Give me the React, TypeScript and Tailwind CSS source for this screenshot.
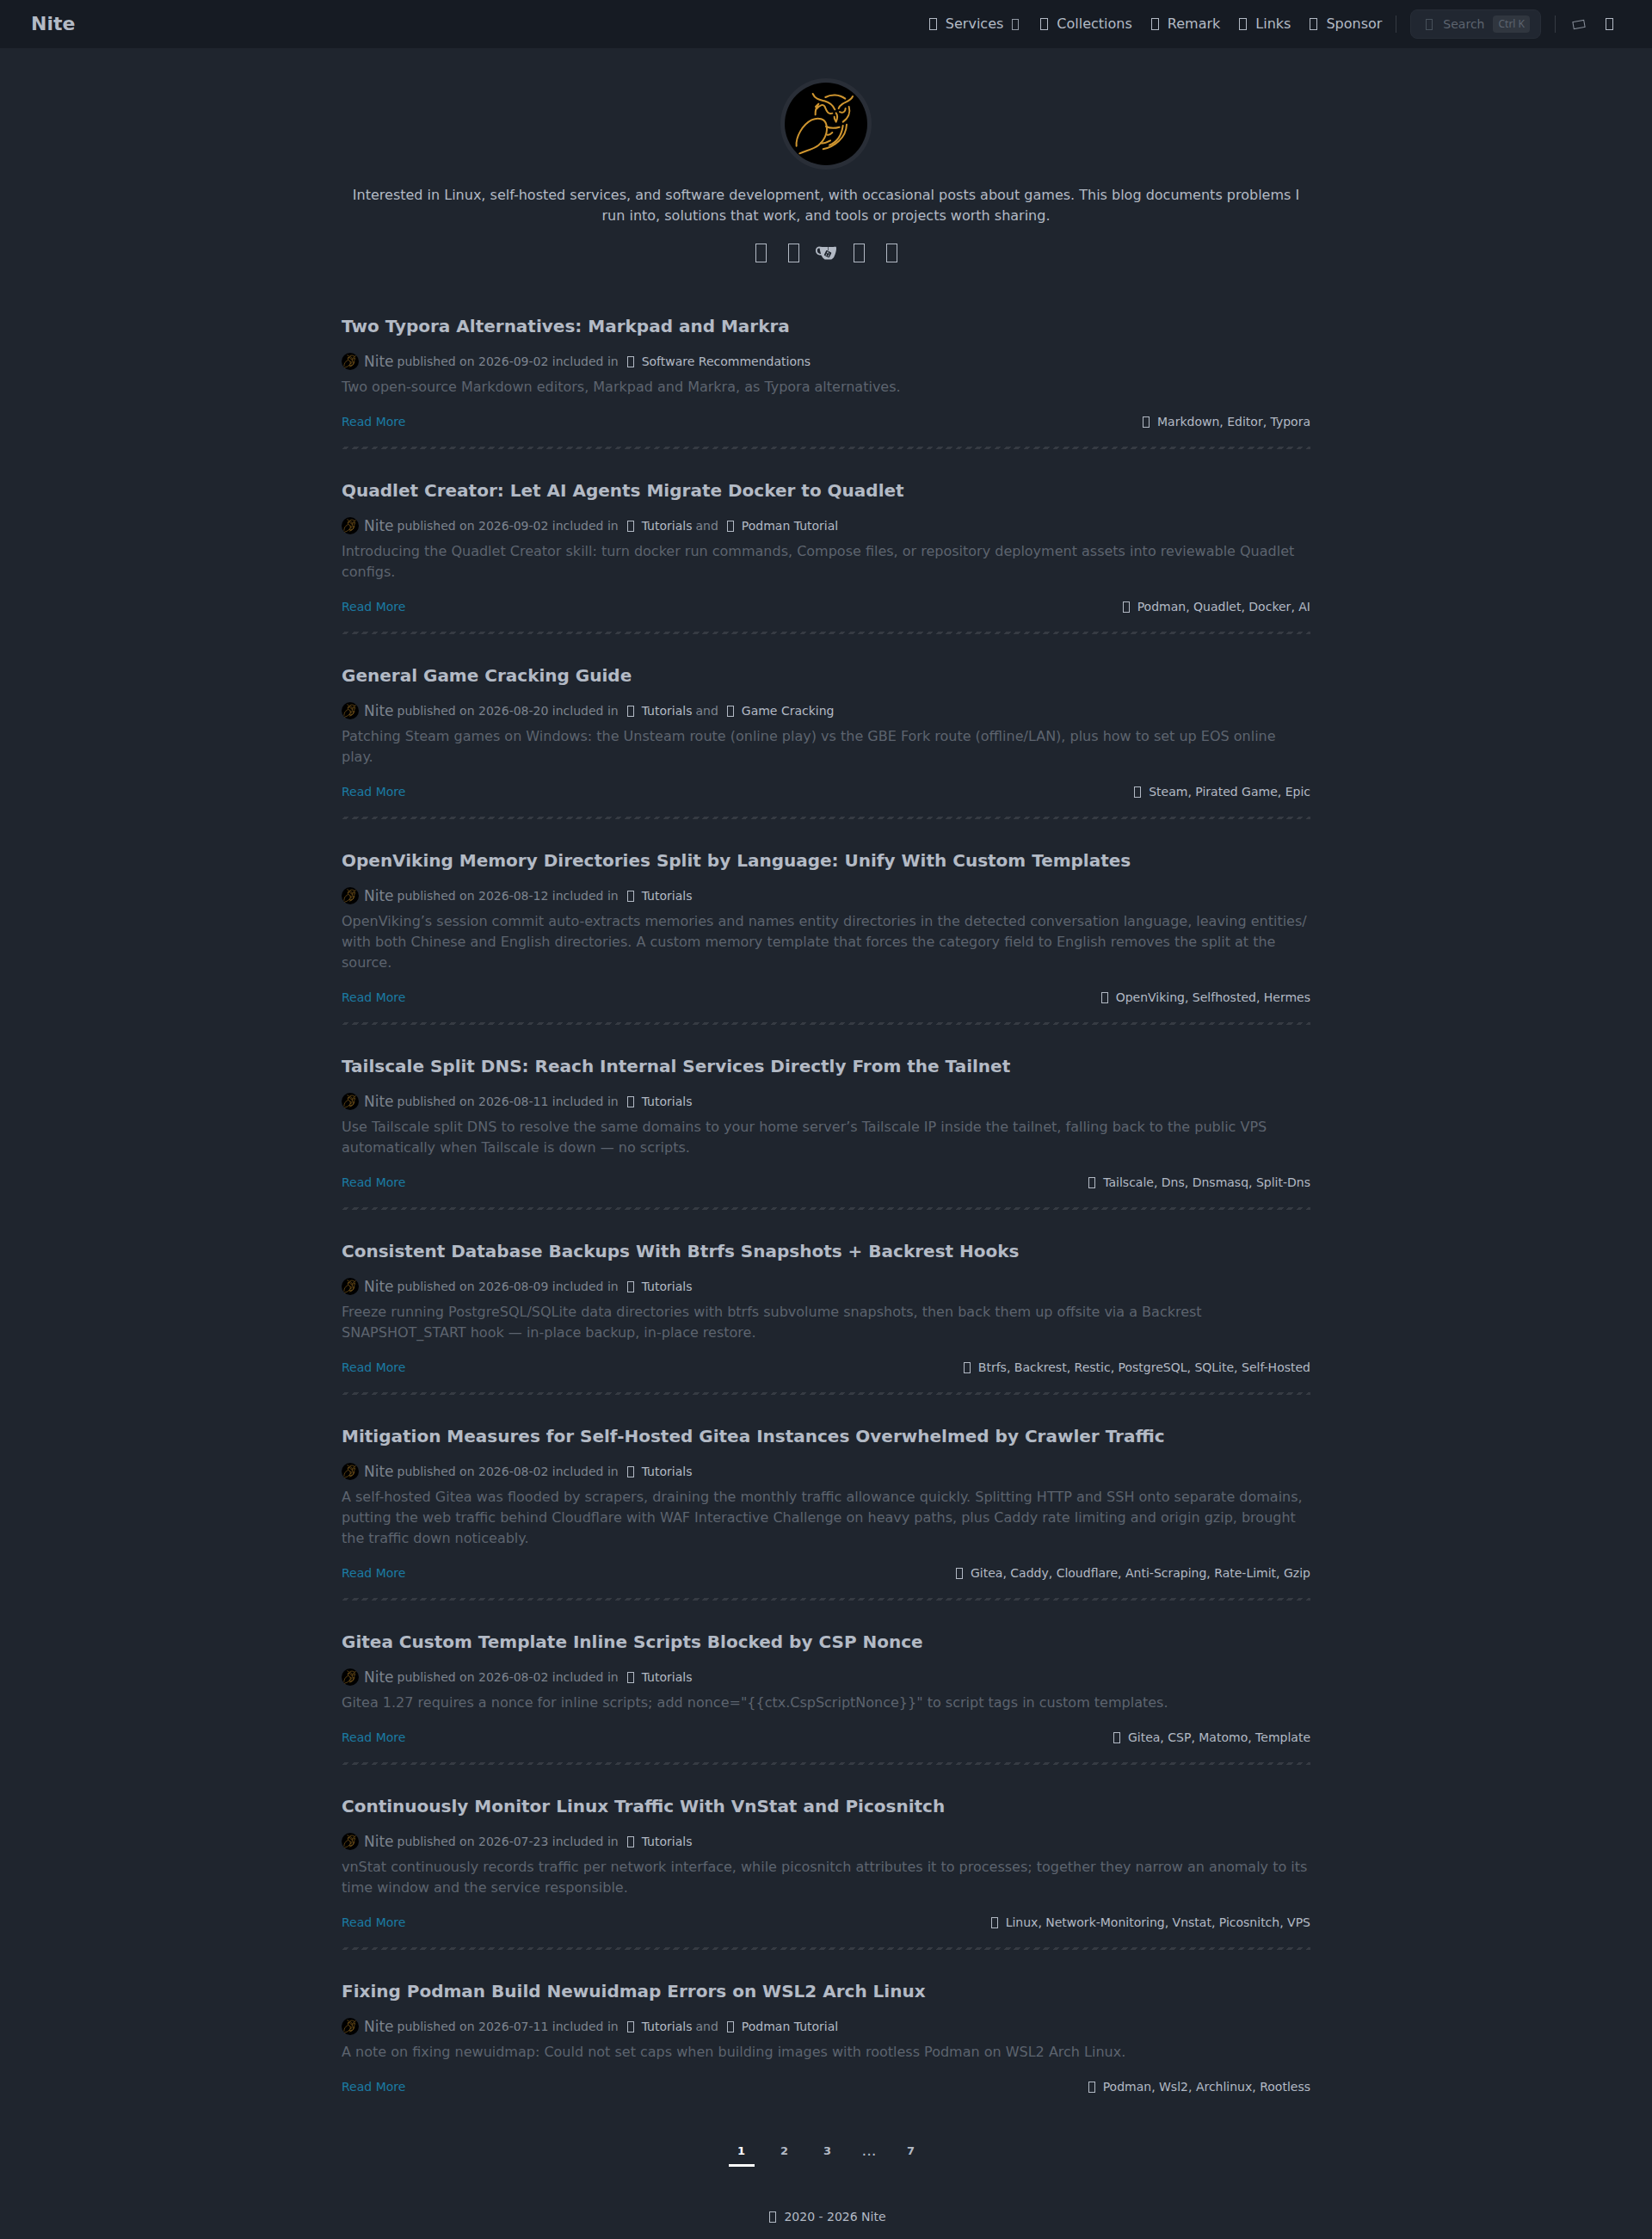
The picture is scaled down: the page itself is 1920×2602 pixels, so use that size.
import React from 'react';
import { SiGitea } from 'react-icons/si';

interface Post {
    title: string;
    date: string;
    categories: string[];
    summary: string;
    tags: string[];
}

const posts: Post[] = [
    {
        title: 'Two Typora Alternatives: Markpad and Markra',
        date: '2026-09-02',
        categories: ['Software Recommendations'],
        summary: 'Two open-source Markdown editors, Markpad and Markra, as Typora alternatives.',
        tags: ['Markdown', 'Editor', 'Typora'],
    },
    {
        title: 'Quadlet Creator: Let AI Agents Migrate Docker to Quadlet',
        date: '2026-09-02',
        categories: ['Tutorials', 'Podman Tutorial'],
        summary: 'Introducing the Quadlet Creator skill: turn docker run commands, Compose files, or repository deployment assets into reviewable Quadlet configs.',
        tags: ['Podman', 'Quadlet', 'Docker', 'AI'],
    },
    {
        title: 'General Game Cracking Guide',
        date: '2026-08-20',
        categories: ['Tutorials', 'Game Cracking'],
        summary: 'Patching Steam games on Windows: the Unsteam route (online play) vs the GBE Fork route (offline/LAN), plus how to set up EOS online play.',
        tags: ['Steam', 'Pirated Game', 'Epic'],
    },
    {
        title: 'OpenViking Memory Directories Split by Language: Unify With Custom Templates',
        date: '2026-08-12',
        categories: ['Tutorials'],
        summary: 'OpenViking’s session commit auto-extracts memories and names entity directories in the detected conversation language, leaving entities/ with both Chinese and English directories. A custom memory template that forces the category field to English removes the split at the source.',
        tags: ['OpenViking', 'Selfhosted', 'Hermes'],
    },
    {
        title: 'Tailscale Split DNS: Reach Internal Services Directly From the Tailnet',
        date: '2026-08-11',
        categories: ['Tutorials'],
        summary: 'Use Tailscale split DNS to resolve the same domains to your home server’s Tailscale IP inside the tailnet, falling back to the public VPS automatically when Tailscale is down — no scripts.',
        tags: ['Tailscale', 'Dns', 'Dnsmasq', 'Split-Dns'],
    },
    {
        title: 'Consistent Database Backups With Btrfs Snapshots + Backrest Hooks',
        date: '2026-08-09',
        categories: ['Tutorials'],
        summary: 'Freeze running PostgreSQL/SQLite data directories with btrfs subvolume snapshots, then back them up offsite via a Backrest SNAPSHOT_START hook — in-place backup, in-place restore.',
        tags: ['Btrfs', 'Backrest', 'Restic', 'PostgreSQL', 'SQLite', 'Self-Hosted'],
    },
    {
        title: 'Mitigation Measures for Self-Hosted Gitea Instances Overwhelmed by Crawler Traffic',
        date: '2026-08-02',
        categories: ['Tutorials'],
        summary: 'A self-hosted Gitea was flooded by scrapers, draining the monthly traffic allowance quickly. Splitting HTTP and SSH onto separate domains, putting the web traffic behind Cloudflare with WAF Interactive Challenge on heavy paths, plus Caddy rate limiting and origin gzip, brought the traffic down noticeably.',
        tags: ['Gitea', 'Caddy', 'Cloudflare', 'Anti-Scraping', 'Rate-Limit', 'Gzip'],
    },
    {
        title: 'Gitea Custom Template Inline Scripts Blocked by CSP Nonce',
        date: '2026-08-02',
        categories: ['Tutorials'],
        summary: 'Gitea 1.27 requires a nonce for inline scripts; add nonce="{{ctx.CspScriptNonce}}" to script tags in custom templates.',
        tags: ['Gitea', 'CSP', 'Matomo', 'Template'],
    },
    {
        title: 'Continuously Monitor Linux Traffic With VnStat and Picosnitch',
        date: '2026-07-23',
        categories: ['Tutorials'],
        summary: 'vnStat continuously records traffic per network interface, while picosnitch attributes it to processes; together they narrow an anomaly to its time window and the service responsible.',
        tags: ['Linux', 'Network-Monitoring', 'Vnstat', 'Picosnitch', 'VPS'],
    },
    {
        title: 'Fixing Podman Build Newuidmap Errors on WSL2 Arch Linux',
        date: '2026-07-11',
        categories: ['Tutorials', 'Podman Tutorial'],
        summary: 'A note on fixing newuidmap: Could not set caps when building images with rootless Podman on WSL2 Arch Linux.',
        tags: ['Podman', 'Wsl2', 'Archlinux', 'Rootless'],
    },
];

const navItems = ['Services', 'Collections', 'Remark', 'Links', 'Sponsor'];

// Small glyph box used wherever the theme puts an icon
const Glyph: React.FC<{ className?: string }> = ({ className = 'w-[9px] h-[14px]' }) => (
    <span aria-hidden="true" className={`inline-block shrink-0 border border-current ${className}`} />
);

const Owl: React.FC<{ className?: string }> = ({ className }) => (
    <svg viewBox="0 0 288 288" className={className} aria-hidden="true">
        <circle cx="144" cy="144" r="144" fill="#000" />
        <g fill="none" stroke="#cf952f" strokeWidth="6" strokeLinecap="round" strokeLinejoin="round">
            <path d="M98 39C106 58 122 60 138 64C156 69 168 78 175 94" />
            <path d="M237 48C230 64 214 66 202 74C196 78 190 84 188 90" />
            <path d="M142 51C162 40 190 40 211 56" />
            <path d="M107 112C106 98 110 86 118 74L108 84M111 92C120 80 134 72 140 84C146 98 150 112 166 107" />
            <path d="M192 102C202 108 212 102 212 90" />
            <path d="M224 84C230 104 222 124 203 137" />
            <path d="M179 106C184 112 186 120 179 137C176 130 172 126 173 119" />
            <path d="M41 221C38 190 62 146 94 130C118 120 140 126 145 146C152 172 140 200 118 218C100 232 78 236 52 247" />
            <path d="M144 153C158 160 174 160 191 155" />
            <path d="M148 182C154 184 160 180 166 174M126 211C138 214 148 208 159 202" />
            <path d="M156 218C182 208 198 186 203 150" />
            <path d="M134 232C172 224 214 194 216 146" />
        </g>
    </svg>
);

const Header: React.FC = () => (
    <header className="flex h-14 items-center justify-between bg-[#161b23] pr-[45px] pl-9">
        <a href="#" className="text-[22px] leading-8 font-bold">Nite</a>
        <nav className="flex items-center">
            <ul className="flex items-center gap-[22px]">
                {navItems.map((item) => (
                    <li key={item}>
                        <a href="#" className="flex items-center gap-[10px]">
                            <Glyph />
                            {item}
                            {item === 'Services' && <Glyph className="mr-[3px] h-[13px] w-2 opacity-80" />}
                        </a>
                    </li>
                ))}
            </ul>
            <span className="mx-4 h-5 w-px bg-[#363b43]" />
            <button type="button" className="flex h-[34px] items-center gap-[10px] rounded-lg border border-[#272d37] bg-[#212731] pr-3 pl-[17px] text-sm text-[#5d646f]">
                <Glyph className="mr-[2px] h-[13px] w-2 text-[#46505a]" />
                Search
                <kbd className="rounded bg-[#30363f] px-[6px] font-sans text-xs leading-5">Ctrl K</kbd>
            </button>
            <span className="mx-4 h-5 w-px bg-[#363b43]" />
            <div className="flex items-center gap-6 pl-1">
                <button type="button" aria-label="Language" className="flex h-8 items-center text-[#8a919c]">
                    <Glyph className="h-[9px] w-[14px] -rotate-10" />
                </button>
                <button type="button" aria-label="Switch theme" className="flex h-8 items-center">
                    <Glyph />
                </button>
            </div>
        </nav>
    </header>
);

const Profile: React.FC = () => (
    <section className="flex flex-col items-center pt-[35px]">
        <div className="rounded-full bg-[#292e37] p-[5px]">
            <Owl className="size-24" />
        </div>
        <p className="mt-[18px] px-3 text-center leading-6">
            Interested in Linux, self-hosted services, and software development, with occasional posts about games. This blog documents problems I run into, solutions that work, and tools or projects worth sharing.
        </p>
        <div className="mt-[19px] flex h-6 items-center gap-2">
            {['GitHub', 'Mastodon', 'Gitea', 'Email', 'RSS'].map((name) => (
                <a key={name} href="#" aria-label={name} className="flex w-[30px] justify-center">
                    {name === 'Gitea' ? <SiGitea className="size-6" /> : <Glyph className="h-[22px] w-[13px]" />}
                </a>
            ))}
        </div>
    </section>
);

const Divider: React.FC = () => (
    <div className="h-[3px] bg-[repeating-linear-gradient(-45deg,#363b43_0_4px,transparent_4px_8px)]" />
);

const PostSummary: React.FC<{ post: Post }> = ({ post }) => (
    <article>
        <h2 className="text-xl leading-7 font-bold">
            <a href="#">{post.title}</a>
        </h2>
        <div className="mt-[13px] flex h-7 items-center text-sm text-[#7d848f]">
            <a href="#" className="flex items-center text-[17px]">
                <Owl className="mr-[6px] size-5" />
                Nite
            </a>
            <span className="ml-1">published on <time dateTime={post.date}>{post.date}</time> included in</span>
            {post.categories.map((category, index) => (
                <React.Fragment key={category}>
                    {index > 0 && <span className="ml-1">and</span>}
                    <a href="#" className="ml-[10px] flex items-center gap-[9px] text-[#b3bac5]">
                        <Glyph className="h-[13px] w-2" />
                        {category}
                    </a>
                </React.Fragment>
            ))}
        </div>
        <p className="mt-1 leading-6 text-[#5d646f]">{post.summary}</p>
        <div className="mt-4 flex h-6 items-center justify-between text-sm">
            <a href="#" className="text-[#1b7ba3]">Read More</a>
            <div className="flex items-center gap-[9px]">
                <Glyph className="h-[13px] w-2" />
                <span>
                    {post.tags.map((tag, index) => (
                        <React.Fragment key={tag}>
                            {index > 0 && ', '}
                            <a href="#">{tag}</a>
                        </React.Fragment>
                    ))}
                </span>
            </div>
        </div>
    </article>
);

const Pagination: React.FC = () => (
    <nav aria-label="Pagination" className="mt-12 flex justify-center gap-5 text-[13px] leading-[30px] font-bold">
        {['1', '2', '3', '...', '7'].map((page) =>
            page === '...' ? (
                <span key={page} className="w-[27px] text-center text-lg leading-7 font-normal">{page}</span>
            ) : (
                <a
                    key={page}
                    href="#"
                    className={`w-[30px] border-b-3 text-center ${page === '1' ? 'border-white text-white' : 'border-transparent'}`}
                >
                    {page}
                </a>
            )
        )}
    </nav>
);

export default function App() {
    return (
        <div className="min-h-screen bg-[#1f252e] font-['DejaVu_Sans',sans-serif] text-base text-[#b3bac5]">
            <Header />
            <main className="mx-auto max-w-[1126px]">
                <Profile />
                <div className="mt-[59px]">
                    {posts.map((post, index) => (
                        <React.Fragment key={post.title}>
                            {index > 0 && (
                                <div className="pt-[17px] pb-[34px]">
                                    <Divider />
                                </div>
                            )}
                            <PostSummary post={post} />
                        </React.Fragment>
                    ))}
                </div>
                <Pagination />
            </main>
            <footer className="flex items-center justify-center gap-[9px] pt-12 pb-4 pl-1 text-sm">
                <Glyph className="h-[13px] w-2" />
                2020 - 2026 Nite
            </footer>
        </div>
    );
}
